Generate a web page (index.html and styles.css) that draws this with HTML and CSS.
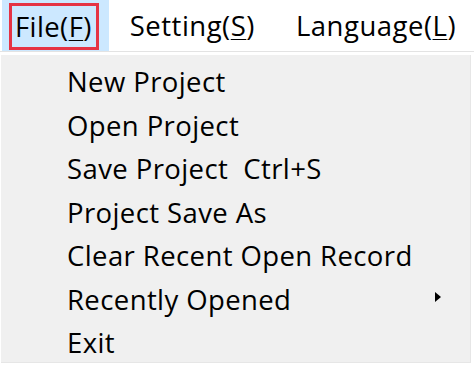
FILE: index.html
```html
<!DOCTYPE html>
<html>
<head>
<meta charset="utf-8">
<link rel="stylesheet" href="styles.css">
</head>
<body>
<div class="menubar">
  <div class="menu-item active"><span class="label">File(<u>F</u>)</span></div>
  <div class="menu-item"><span class="label">Setting(<u>S</u>)</span></div>
  <div class="menu-item"><span class="label">Language(<u>L</u>)</span></div>
</div>
<div class="dropdown">
  <div class="entry">New Project</div>
  <div class="entry">Open Project</div>
  <div class="entry">Save Project&nbsp;&nbsp;Ctrl+S</div>
  <div class="entry">Project Save As</div>
  <div class="entry">Clear Recent Open Record</div>
  <div class="entry submenu">Recently Opened<span class="arrow"></span></div>
  <div class="entry">Exit</div>
</div>
</body>
</html>
```
FILE: styles.css
```css
html, body {
  margin: 0;
  padding: 0;
  background: #ffffff;
  width: 474px;
  height: 367px;
  overflow: hidden;
  font-family: "Open Sans", "Noto Sans", sans-serif;
  color: #000;
}
.menubar {
  display: flex;
  height: 51px;
  border-bottom: 1px solid #e3e3e3;
  background: #fff;
  padding-left: 2px;
}
.menu-item {
  height: 51px;
  display: flex;
  align-items: center;
  font-size: 27.5px;
  letter-spacing: 0.5px;
  padding: 0 20px 0 21px;
}
.menu-item u {
  text-decoration-thickness: 1px;
  text-underline-offset: 3px;
}
.menu-item.active {
  background: #cce8ff;
  padding: 0 10px 0 7px;
  letter-spacing: 0.4px;
}
.menu-item.active .label {
  border: 3px solid #e53344;
  height: 47px;
  margin-top: 3px;
  align-self: flex-start;
  box-sizing: border-box;
  padding: 0 4px 0 3px;
  display: flex;
  align-items: center;
}
.dropdown {
  margin-top: 3px;
  margin-left: 1px;
  width: 470px;
  height: 308px;
  background: #f0f0f0;
  border-right: 1px solid #e6e6e6;
  border-bottom: 1px solid #e6e6e6;
  padding-top: 5px;
  box-sizing: border-box;
}
.entry {
  height: 43.5px;
  line-height: 43.5px;
  font-size: 27.5px;
  letter-spacing: 0.4px;
  padding-left: 66px;
  position: relative;
  white-space: nowrap;
}
.arrow {
  position: absolute;
  left: 434px;
  top: 14px;
  width: 0;
  height: 0;
  border-top: 5px solid transparent;
  border-bottom: 5px solid transparent;
  border-left: 6px solid #000;
}
```
